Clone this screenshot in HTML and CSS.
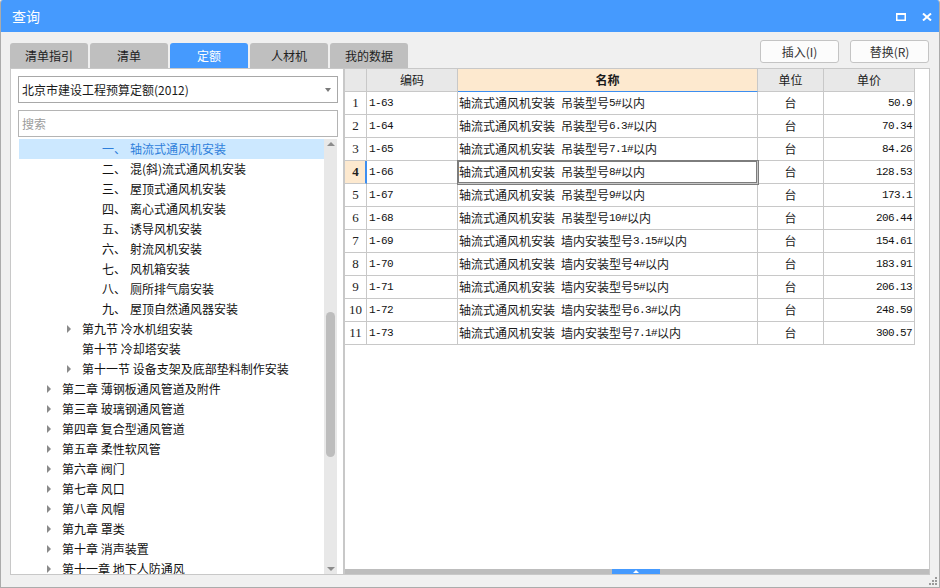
FILE: index.html
```html
<!DOCTYPE html>
<html lang="zh-CN">
<head>
<meta charset="utf-8">
<title>查询</title>
<link rel="stylesheet" href="styles.css">
</head>
<body>
<div class="window">
  <div class="titlebar">
    <span class="title">查询</span>
    <div class="winbtns">
      <svg class="wicon" width="10" height="8" viewBox="0 0 10 8"><rect x="0.75" y="1" width="8.5" height="6.25" fill="none" stroke="#fff" stroke-width="1.5"/><rect x="0" y="0" width="10" height="2" fill="#fff"/></svg>
      <svg class="wicon" width="10" height="8" viewBox="0 0 10 8"><path d="M1 0.5 L9 7.5 M9 0.5 L1 7.5" stroke="#fff" stroke-width="2" fill="none"/></svg>
    </div>
  </div>
  <div class="content">
    <div class="toprow">
      <div class="tabs">
        <div class="tab">清单指引</div>
        <div class="tab">清单</div>
        <div class="tab active">定额</div>
        <div class="tab">人材机</div>
        <div class="tab">我的数据</div>
      </div>
      <div class="actions">
        <button class="btn">插入(I)</button>
        <button class="btn">替换(R)</button>
      </div>
    </div>
    <div class="main">
      <div class="left">
        <div class="select"><span>北京市建设工程预算定额(2012)</span><i class="caret"></i></div>
        <div class="search">搜索</div>
        <div class="tree">
          <div class="tree-list">
            <div class="node l3 sel"><span class="tog"></span><span class="num">一、</span>轴流式通风机安装</div>
            <div class="node l3"><span class="tog"></span><span class="num">二、</span>混(斜)流式通风机安装</div>
            <div class="node l3"><span class="tog"></span><span class="num">三、</span>屋顶式通风机安装</div>
            <div class="node l3"><span class="tog"></span><span class="num">四、</span>离心式通风机安装</div>
            <div class="node l3"><span class="tog"></span><span class="num">五、</span>诱导风机安装</div>
            <div class="node l3"><span class="tog"></span><span class="num">六、</span>射流风机安装</div>
            <div class="node l3"><span class="tog"></span><span class="num">七、</span>风机箱安装</div>
            <div class="node l3"><span class="tog"></span><span class="num">八、</span>厕所排气扇安装</div>
            <div class="node l3"><span class="tog"></span><span class="num">九、</span>屋顶自然通风器安装</div>
            <div class="node l2"><span class="tog has"></span>第九节 冷水机组安装</div>
            <div class="node l2"><span class="tog"></span>第十节 冷却塔安装</div>
            <div class="node l2"><span class="tog has"></span>第十一节 设备支架及底部垫料制作安装</div>
            <div class="node l1"><span class="tog has"></span>第二章 薄钢板通风管道及附件</div>
            <div class="node l1"><span class="tog has"></span>第三章 玻璃钢通风管道</div>
            <div class="node l1"><span class="tog has"></span>第四章 复合型通风管道</div>
            <div class="node l1"><span class="tog has"></span>第五章 柔性软风管</div>
            <div class="node l1"><span class="tog has"></span>第六章 阀门</div>
            <div class="node l1"><span class="tog has"></span>第七章 风口</div>
            <div class="node l1"><span class="tog has"></span>第八章 风帽</div>
            <div class="node l1"><span class="tog has"></span>第九章 罩类</div>
            <div class="node l1"><span class="tog has"></span>第十章 消声装置</div>
            <div class="node l1"><span class="tog has"></span>第十一章 地下人防通风</div>
          </div>
          <div class="vscroll">
            <i class="arr-up"></i>
            <div class="vthumb"></div>
            <i class="arr-down"></i>
          </div>
        </div>
      </div>
      <div class="grid">
        <div class="rows">
          <div class="row head">
            <div class="c rn"></div>
            <div class="c code">编码</div>
            <div class="c name">名称</div>
            <div class="c unit">单位</div>
            <div class="c price">单价</div>
          </div>
          <div class="row"><div class="c rn">1</div><div class="c code m">1-63</div><div class="c name">轴流式通风机安装<span class="m"> </span>吊装型号<span class="m">5#</span>以内</div><div class="c unit">台</div><div class="c price m">50.9</div></div>
          <div class="row"><div class="c rn">2</div><div class="c code m">1-64</div><div class="c name">轴流式通风机安装<span class="m"> </span>吊装型号<span class="m">6.3#</span>以内</div><div class="c unit">台</div><div class="c price m">70.34</div></div>
          <div class="row"><div class="c rn">3</div><div class="c code m">1-65</div><div class="c name">轴流式通风机安装<span class="m"> </span>吊装型号<span class="m">7.1#</span>以内</div><div class="c unit">台</div><div class="c price m">84.26</div></div>
          <div class="row"><div class="c rn cur">4</div><div class="c code m">1-66</div><div class="c name sel">轴流式通风机安装<span class="m"> </span>吊装型号<span class="m">8#</span>以内</div><div class="c unit">台</div><div class="c price m">128.53</div></div>
          <div class="row"><div class="c rn">5</div><div class="c code m">1-67</div><div class="c name">轴流式通风机安装<span class="m"> </span>吊装型号<span class="m">9#</span>以内</div><div class="c unit">台</div><div class="c price m">173.1</div></div>
          <div class="row"><div class="c rn">6</div><div class="c code m">1-68</div><div class="c name">轴流式通风机安装<span class="m"> </span>吊装型号<span class="m">10#</span>以内</div><div class="c unit">台</div><div class="c price m">206.44</div></div>
          <div class="row"><div class="c rn">7</div><div class="c code m">1-69</div><div class="c name">轴流式通风机安装<span class="m"> </span>墙内安装型号<span class="m">3.15#</span>以内</div><div class="c unit">台</div><div class="c price m">154.61</div></div>
          <div class="row"><div class="c rn">8</div><div class="c code m">1-70</div><div class="c name">轴流式通风机安装<span class="m"> </span>墙内安装型号<span class="m">4#</span>以内</div><div class="c unit">台</div><div class="c price m">183.91</div></div>
          <div class="row"><div class="c rn">9</div><div class="c code m">1-71</div><div class="c name">轴流式通风机安装<span class="m"> </span>墙内安装型号<span class="m">5#</span>以内</div><div class="c unit">台</div><div class="c price m">206.13</div></div>
          <div class="row"><div class="c rn">10</div><div class="c code m">1-72</div><div class="c name">轴流式通风机安装<span class="m"> </span>墙内安装型号<span class="m">6.3#</span>以内</div><div class="c unit">台</div><div class="c price m">248.59</div></div>
          <div class="row"><div class="c rn">11</div><div class="c code m">1-73</div><div class="c name">轴流式通风机安装<span class="m"> </span>墙内安装型号<span class="m">7.1#</span>以内</div><div class="c unit">台</div><div class="c price m">300.57</div></div>
        </div>
        <div class="hscroll"><div class="hthumb"><i class="hmark"></i></div></div>
      </div>
    </div>
    <div class="statusbar">
      <svg class="grip" width="9" height="9" viewBox="0 0 9 9" fill="#9a9a9a"><rect x="6" y="0" width="2" height="2"/><rect x="3" y="3" width="2" height="2"/><rect x="6" y="3" width="2" height="2"/><rect x="0" y="6" width="2" height="2"/><rect x="3" y="6" width="2" height="2"/><rect x="6" y="6" width="2" height="2"/></svg>
    </div>
  </div>
</div>
</body>
</html>
```
FILE: styles.css
```css
html, body {
  margin: 0;
  padding: 0;
  background: #f0f0f0;
}
body {
  font-family: "Noto Sans CJK SC", "Microsoft YaHei", sans-serif;
  font-size: 12px;
  color: #1a1a1a;
}
.window {
  width: 940px;
  height: 588px;
  box-sizing: border-box;
  border: 1px solid #ababab;
  border-top: none;
  border-radius: 3px 3px 0 0;
  background: #f0f0f0;
  display: flex;
  flex-direction: column;
  overflow: hidden;
}
.titlebar {
  height: 32px;
  flex: none;
  background: #459afe;
  color: #fff;
  display: flex;
  align-items: center;
  padding: 0 8px 0 12px;
  margin: 0 -1px;
}
.title {
  font-size: 14px;
  line-height: 16px;
}
.winbtns {
  margin-left: auto;
  display: flex;
  gap: 16px;
  align-items: center;
  margin-top: 1px;
}
.wicon { display: block; }
.content {
  flex: 1;
  display: flex;
  flex-direction: column;
  padding: 0 9px;
  min-height: 0;
}
.toprow {
  height: 36px;
  flex: none;
  display: flex;
  justify-content: space-between;
}
.tabs {
  display: flex;
  gap: 2px;
  align-self: flex-end;
}
.tab {
  width: 78px;
  height: 25px;
  background: #bfbfbf;
  border-radius: 3px 3px 0 0;
  display: flex;
  align-items: center;
  justify-content: center;
  color: #222;
  font-size: 12px;
  line-height: 14px;
}
.tab.active {
  background: #459afe;
  color: #fff;
}
.actions {
  display: flex;
  gap: 11px;
  margin-top: 8px;
  margin-right: 1px;
  align-self: flex-start;
}
.btn {
  width: 79px;
  height: 23px;
  box-sizing: border-box;
  border: 1px solid #c4c4c4;
  border-radius: 3px;
  background: #fcfcfc;
  font-family: "Noto Sans CJK SC", sans-serif;
  font-size: 12px;
  line-height: 14px;
  color: #333;
  padding: 0;
}
.main {
  height: 507px;
  flex: none;
  display: flex;
}
.left {
  width: 334px;
  flex: none;
  box-sizing: border-box;
  border: 1px solid #c8c8c8;
  background: #fff;
  padding: 7px 5px 0 7px;
  display: flex;
  flex-direction: column;
  min-height: 0;
}
.select {
  height: 27px;
  flex: none;
  box-sizing: border-box;
  border: 1px solid #a8a8a8;
  display: flex;
  align-items: center;
  padding-left: 3px;
  line-height: 14px;
}
.caret {
  margin-left: auto;
  margin-right: 6px;
  width: 0;
  height: 0;
  border-top: 4px solid #7a7a7a;
  border-left: 3px solid transparent;
  border-right: 3px solid transparent;
}
.search {
  margin-top: 7px;
  height: 27px;
  flex: none;
  box-sizing: border-box;
  border: 1px solid #b4b4b4;
  color: #9c9c9c;
  padding-left: 3px;
  display: flex;
  align-items: center;
  line-height: 14px;
}
.tree {
  margin: 2px 1px 0 1px;
  flex: 1;
  display: flex;
  min-height: 0;
  overflow: hidden;
}
.tree-list {
  flex: 1;
  overflow: hidden;
}
.node {
  height: 20px;
  line-height: 20px;
  display: flex;
  align-items: center;
  white-space: nowrap;
  color: #111;
}
.node.l1 { padding-left: 27px; }
.node.l2 { padding-left: 47px; }
.node.l3 { padding-left: 67px; }
.node.sel {
  background: #cce8ff;
  color: #2f7fdb;
}
.tog {
  width: 16px;
  flex: none;
  display: flex;
  align-items: center;
}
.tog.has::before {
  content: "";
  margin-left: 1px;
  width: 0;
  height: 0;
  border-left: 4px solid #8a8a8a;
  border-top: 4px solid transparent;
  border-bottom: 4px solid transparent;
}
.num {
  width: 28px;
  flex: none;
}
.vscroll {
  width: 13px;
  flex: none;
  background: #e8e8e8;
  display: flex;
  flex-direction: column;
  align-items: center;
}
.arr-up {
  margin-top: 3px;
  width: 0;
  height: 0;
  border-bottom: 4px solid #8c8c8c;
  border-left: 4px solid transparent;
  border-right: 4px solid transparent;
}
.vthumb {
  margin-top: 166px;
  width: 9px;
  height: 145px;
  background: #bdbdbd;
  border-radius: 5px;
}
.arr-down {
  margin-top: auto;
  margin-bottom: 3px;
  width: 0;
  height: 0;
  border-top: 4px solid #8c8c8c;
  border-left: 4px solid transparent;
  border-right: 4px solid transparent;
}
.grid {
  flex: 1;
  box-sizing: border-box;
  border: 1px solid #c8c8c8;
  background: #fff;
  display: flex;
  flex-direction: column;
  min-width: 0;
}
.rows {
  flex: 1;
}
.row {
  display: flex;
  height: 23px;
}
.c {
  box-sizing: border-box;
  border-right: 1px solid #c8c8c8;
  border-bottom: 1px solid #c8c8c8;
  height: 23px;
  display: flex;
  align-items: center;
  white-space: pre;
  overflow: hidden;
  flex: none;
  line-height: 14px;
}
.rn {
  width: 22px;
  justify-content: center;
  font-family: "Liberation Serif", serif;
  font-size: 13px;
  color: #222;
}
.code { width: 91px; padding-left: 2px; }
.name { width: 300px; padding-left: 1px; }
.unit { width: 66px; justify-content: center; }
.price { width: 91px; justify-content: flex-end; padding-right: 2px; }
.head .c {
  background: #e8e8e8;
  justify-content: center;
  padding: 0;
}
.head .name {
  background: #fde9cf;
  font-weight: bold;
  border-bottom-color: #3d8ef0;
}
.rn.cur {
  background: #fde9cf;
  font-weight: bold;
  border-right: 2px solid #3d8ef0;
  padding-left: 1px;
}
.name.sel {
  position: relative;
  box-shadow: 0 0 0 1px #7d7d7d, inset 0 0 0 1px #7d7d7d;
}
.m {
  font-family: "Liberation Mono", monospace;
  font-size: 11px;
  letter-spacing: -0.6px;
  color: #111;
}
.hscroll {
  height: 5px;
  flex: none;
  background: #bdbdbd;
  display: flex;
}
.hthumb {
  margin-left: 267px;
  width: 48px;
  background: #459afe;
  display: flex;
  justify-content: center;
  align-items: flex-end;
}
.hmark {
  width: 0;
  height: 0;
  border-bottom: 3px solid #fff;
  border-left: 3px solid transparent;
  border-right: 3px solid transparent;
  margin-bottom: 1px;
}
.statusbar {
  flex: 1;
  display: flex;
  justify-content: flex-end;
  align-items: flex-end;
  margin-right: -8px;
}
.grip {
  display: block;
  margin-bottom: 1px;
}
```
